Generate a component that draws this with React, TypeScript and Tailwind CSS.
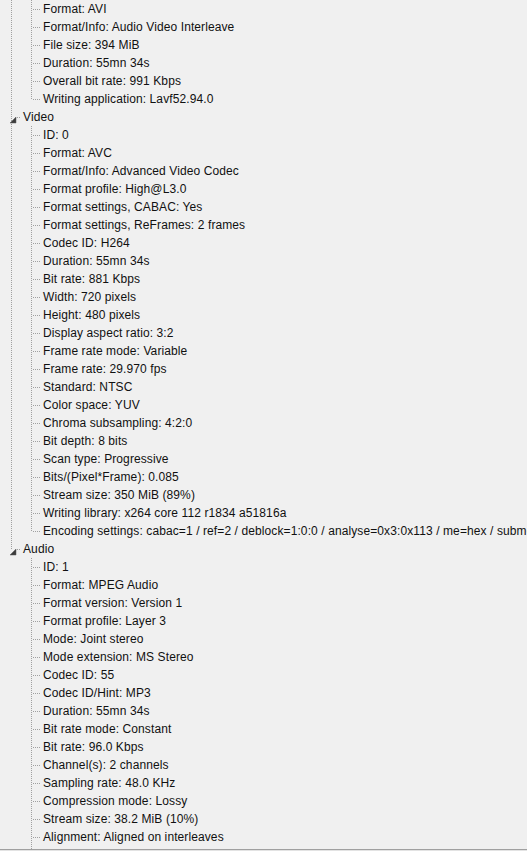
import React from "react";

type Node = { label: string; children?: string[] };

const general = [
  "Format: AVI",
  "Format/Info: Audio Video Interleave",
  "File size: 394 MiB",
  "Duration: 55mn 34s",
  "Overall bit rate: 991 Kbps",
  "Writing application: Lavf52.94.0",
];

const sections: Node[] = [
  {
    label: "Video",
    children: [
      "ID: 0",
      "Format: AVC",
      "Format/Info: Advanced Video Codec",
      "Format profile: High@L3.0",
      "Format settings, CABAC: Yes",
      "Format settings, ReFrames: 2 frames",
      "Codec ID: H264",
      "Duration: 55mn 34s",
      "Bit rate: 881 Kbps",
      "Width: 720 pixels",
      "Height: 480 pixels",
      "Display aspect ratio: 3:2",
      "Frame rate mode: Variable",
      "Frame rate: 29.970 fps",
      "Standard: NTSC",
      "Color space: YUV",
      "Chroma subsampling: 4:2:0",
      "Bit depth: 8 bits",
      "Scan type: Progressive",
      "Bits/(Pixel*Frame): 0.085",
      "Stream size: 350 MiB (89%)",
      "Writing library: x264 core 112 r1834 a51816a",
      "Encoding settings: cabac=1 / ref=2 / deblock=1:0:0 / analyse=0x3:0x113 / me=hex / subme=6 / psy=1 / psy_rd=1.00:0.00",
    ],
  },
  {
    label: "Audio",
    children: [
      "ID: 1",
      "Format: MPEG Audio",
      "Format version: Version 1",
      "Format profile: Layer 3",
      "Mode: Joint stereo",
      "Mode extension: MS Stereo",
      "Codec ID: 55",
      "Codec ID/Hint: MP3",
      "Duration: 55mn 34s",
      "Bit rate mode: Constant",
      "Bit rate: 96.0 Kbps",
      "Channel(s): 2 channels",
      "Sampling rate: 48.0 KHz",
      "Compression mode: Lossy",
      "Stream size: 38.2 MiB (10%)",
      "Alignment: Aligned on interleaves",
    ],
  },
];

const DOT = "#a0a0a0";

function Gutter({
  v,
  mode,
  h,
  triangle,
}: {
  v: number;
  mode: "full" | "top" | "none";
  h?: [number, number];
  triangle?: boolean;
}) {
  return (
    <svg width={20} height={18} className="shrink-0 block" shapeRendering="crispEdges">
      {mode !== "none" && (
        <line
          x1={v + 0.5}
          x2={v + 0.5}
          y1={0}
          y2={mode === "full" ? 18 : 9}
          stroke={DOT}
          strokeWidth={1}
          strokeDasharray="1 1"
        />
      )}
      {h && (
        <line
          x1={h[0]}
          x2={h[1]}
          y1={9.5}
          y2={9.5}
          stroke={DOT}
          strokeWidth={1}
          strokeDasharray="1 1"
        />
      )}
      {triangle && (
        <polygon points="10,15 16,15 16,9" fill="#3c3c3c" stroke="#5a5a5a" strokeWidth={0.5} shapeRendering="auto" />
      )}
    </svg>
  );
}

function Row({ children, gutters }: { children: React.ReactNode; gutters: React.ReactNode }) {
  return (
    <div className="flex h-[18px] items-center whitespace-nowrap">
      {gutters}
      <span className="pl-[3px] leading-[18px]">{children}</span>
    </div>
  );
}

export default function App() {
  return (
    <div
      className="w-[527px] h-[851px] overflow-hidden bg-[#f0f0f0] text-[12px] tracking-[0.1px] text-[#111] flex flex-col"
      style={{ fontFamily: '"Liberation Sans", Arial, sans-serif' }}
    >
      <div className="flex-1 overflow-hidden">
        <div>
          {general.map((t, i) => (
            <Row
              key={"g" + i}
              gutters={
                <>
                  <Gutter v={11} mode="full" />
                  <Gutter v={11} mode={i === general.length - 1 ? "top" : "full"} h={[13, 20]} />
                </>
              }
            >
              {t}
            </Row>
          ))}
          {sections.map((s, si) => {
            const lastSec = si === sections.length - 1;
            return (
              <React.Fragment key={s.label}>
                <div className="flex h-[18px] items-center whitespace-nowrap">
                  <Gutter v={11} mode={lastSec ? "top" : "full"} h={[17, 20]} triangle />
                  <span className="pl-[3px] leading-[18px]">{s.label}</span>
                </div>
                {s.children!.map((t, i) => (
                  <Row
                    key={s.label + i}
                    gutters={
                      <>
                        <Gutter v={11} mode={lastSec ? "none" : "full"} />
                        <Gutter
                          v={11}
                          mode={i === s.children!.length - 1 && !lastSec ? "top" : "full"}
                          h={[13, 20]}
                        />
                      </>
                    }
                  >
                    {t}
                  </Row>
                ))}
                {lastSec && (
                  <div className="flex h-[18px]">
                    <Gutter v={11} mode="none" />
                    <Gutter v={11} mode="full" />
                  </div>
                )}
              </React.Fragment>
            );
          })}
        </div>
      </div>
      <div className="h-px bg-[#a0a0a0] shrink-0" />
      <div className="h-px bg-[#e3e3e3] shrink-0" />
    </div>
  );
}
